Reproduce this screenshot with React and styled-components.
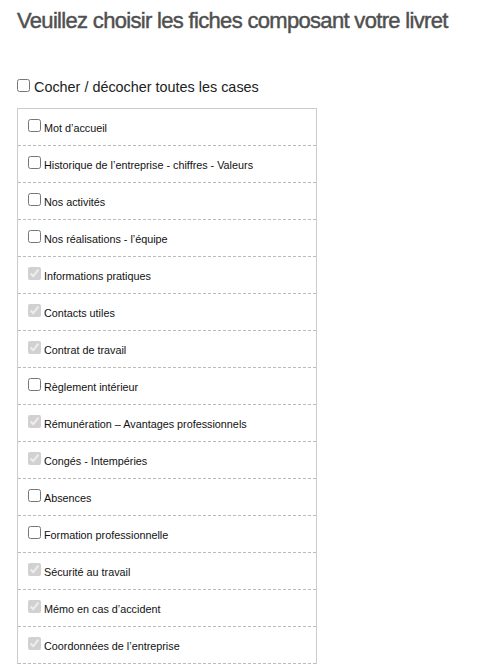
import React from "react";
import styled, { createGlobalStyle } from "styled-components";

const Global = createGlobalStyle`
  html, body { margin: 0; padding: 0; background: #fff; }
  body { font-family: "Liberation Sans", Arial, sans-serif; }
`;

const Page = styled.div`
  padding: 0 17px;
`;

const Title = styled.h2`
  margin: 0;
  padding-top: 8px;
  font-size: 22px;
  line-height: 26px;
  font-weight: 400;
  letter-spacing: -0.68px;
  color: #505050;
  -webkit-text-stroke: 0.45px #505050;
  white-space: nowrap;
`;

const ToggleAll = styled.label`
  display: block;
  margin-top: 44px;
  font-size: 14.4px;
  line-height: 18px;
  color: #222;
`;

const Box = styled.input.attrs({ type: "checkbox" })`
  width: 13px;
  height: 13px;
  margin: 0 ${(p) => (p.$gap ? p.$gap : 3)}px 0 0;
  vertical-align: baseline;
`;

const List = styled.ul`
  list-style: none;
  margin: 12px 0 0;
  padding: 0;
  width: 298px;
  border: 1px solid #ccc;
  border-bottom: none;
`;

const Row = styled.li`
  height: 37px;
  box-sizing: border-box;
  padding: 10px 10px 0;
  border-bottom: 1px dashed #bbb;
  font-size: 10.8px;
  line-height: 16px;
  color: #111;
`;

const items = [
  ["Mot d’accueil", false],
  ["Historique de l’entreprise - chiffres - Valeurs", false],
  ["Nos activités", false],
  ["Nos réalisations - l’équipe", false],
  ["Informations pratiques", true],
  ["Contacts utiles", true],
  ["Contrat de travail", true],
  ["Règlement intérieur", false],
  ["Rémunération – Avantages professionnels", true],
  ["Congés - Intempéries", true],
  ["Absences", false],
  ["Formation professionnelle", false],
  ["Sécurité au travail", true],
  ["Mémo en cas d’accident", true],
  ["Coordonnées de l’entreprise", true],
];

export default function App() {
  return (
    <>
      <Global />
      <Page>
        <Title>Veuillez choisir les fiches composant votre livret</Title>
        <ToggleAll>
          <Box $gap={4} />
          Cocher / décocher toutes les cases
        </ToggleAll>
        <List>
          {items.map(([label, locked]) => (
            <Row key={label}>
              <label>
                {locked ? <Box checked disabled readOnly /> : <Box />}
                {label}
              </label>
            </Row>
          ))}
        </List>
      </Page>
    </>
  );
}
